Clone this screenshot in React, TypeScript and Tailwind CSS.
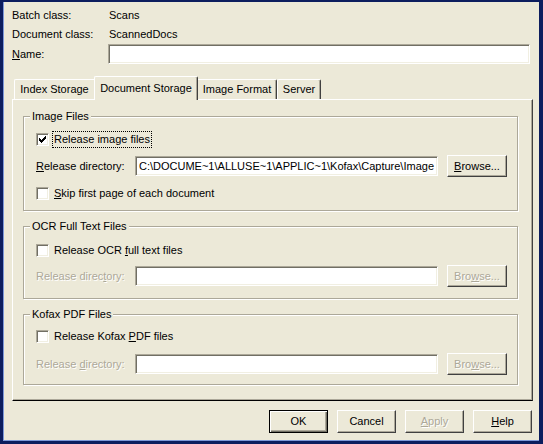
import type { ReactNode } from "react";

const dim = "text-[#aca899] [text-shadow:1px_1px_0_#fff]";

function Check({ checked = false }: { checked?: boolean }) {
  return (
    <span className="w-[13px] h-[13px] shrink-0 bg-white border border-t-[#aca899] border-l-[#aca899] border-r-white border-b-white shadow-[inset_1px_1px_0_#716f64,inset_-1px_-1px_0_#f1efe2] flex items-center justify-center">
      {checked && (
        <svg width="7" height="7" viewBox="0 0 7 7" shapeRendering="crispEdges">
          {[2, 3, 4, 3, 2, 1, 0].map((y, x) => (
            <rect key={x} x={x} y={y} width="1" height="3" fill="#000" />
          ))}
        </svg>
      )}
    </span>
  );
}

function Field({ value = "", className = "" }: { value?: string; className?: string }) {
  return (
    <div
      className={`h-[20px] bg-white border border-t-[#aca899] border-l-[#aca899] border-r-white border-b-white shadow-[inset_1px_1px_0_#716f64,inset_-1px_-1px_0_#f1efe2] flex items-center px-[3px] overflow-hidden whitespace-nowrap ${className}`}
    >
      {value}
    </div>
  );
}

function Btn({
  children,
  size = "w-[59px] h-[23px]",
  def = false,
  disabled = false,
}: {
  children: ReactNode;
  size?: string;
  def?: boolean;
  disabled?: boolean;
}) {
  return (
    <div
      className={`${size} shrink-0 flex items-center justify-center bg-[#ece9d8] border ${
        def
          ? "border-black shadow-[inset_1px_1px_0_#fff,inset_-1px_-1px_0_#716f64,inset_-2px_-2px_0_#aca899]"
          : "border-t-white border-l-white border-r-[#404040] border-b-[#404040] shadow-[inset_-1px_-1px_0_#aca899]"
      } ${disabled ? dim : ""}`}
    >
      {children}
    </div>
  );
}

function Group({
  title,
  height,
  className = "",
  children,
}: {
  title: string;
  height: string;
  className?: string;
  children: ReactNode;
}) {
  return (
    <div
      className={`relative ml-[10px] w-[495px] ${height} border border-[#aca899] shadow-[inset_1px_1px_0_#fff,1px_1px_0_#fff] ${className}`}
    >
      <span className="absolute -top-[8px] left-[6px] bg-[#ece9d8] px-[2px] leading-[14px]">{title}</span>
      {children}
    </div>
  );
}

function DirRow({ disabled = false, mnemonic }: { disabled?: boolean; mnemonic: ReactNode }) {
  return (
    <div className="flex items-center h-[22px]">
      <span className={`w-[99px] shrink-0 ${disabled ? dim : ""}`}>{mnemonic}</span>
      <Field className="w-[303px]" value={disabled ? "" : "C:\\DOCUME~1\\ALLUSE~1\\APPLIC~1\\Kofax\\Capture\\Image"} />
      <div className="ml-[9px]">
        <Btn size="w-[60px] h-[22px]" disabled={disabled}>
          {disabled ? (
            <span>
              Bro<u>w</u>se...
            </span>
          ) : (
            <span>
              <u>B</u>rowse...
            </span>
          )}
        </Btn>
      </div>
    </div>
  );
}

export default function App() {
  return (
    <div className="w-[543px] h-[444px] bg-[#0c1d5e] border-t-2 border-l-[3px] border-r-[4px] border-b-[3px] border-[#0c1d5e] font-['Liberation_Sans',Arial,sans-serif] text-[11px] text-black leading-none">
      <div className="h-full bg-[#ece9d8] border-l border-b border-[#7d98d8] flex flex-col">
        <div className="pl-2 pt-1">
          <div className="flex items-center h-[19px]">
            <span className="w-[97px]">Batch class:</span>
            <span>Scans</span>
          </div>
          <div className="flex items-center h-[19px]">
            <span className="w-[97px]">Document class:</span>
            <span>ScannedDocs</span>
          </div>
          <div className="flex items-center h-[20px]">
            <span className="w-[96px]">
              <u>N</u>ame:
            </span>
            <Field className="w-[422px]" />
          </div>
        </div>

        <div className="mt-3 ml-2 flex items-end h-[23px] relative z-10">
          <div className="ml-[2px] w-[80px] h-[20px] flex items-center justify-center border-t border-l border-white rounded-tl-[2px]">
            Index Storage
          </div>
          <div className="w-[104px] h-[24px] -mb-[1px] flex items-center justify-center bg-[#ece9d8] border-t border-l border-r border-t-white border-l-white border-r-[#404040] shadow-[inset_-1px_0_0_#aca899] rounded-t-[2px] pb-[1px]">
            Document Storage
          </div>
          <div className="w-[79px] h-[20px] flex items-center justify-center border-t border-r border-t-white border-r-[#404040] shadow-[inset_-1px_0_0_#aca899] rounded-tr-[2px]">
            Image Format
          </div>
          <div className="w-[44px] h-[20px] flex items-center justify-center border-t border-l border-r border-t-white border-l-white border-r-[#404040] shadow-[inset_-1px_0_0_#aca899] rounded-t-[2px]">
            Server
          </div>
        </div>

        <div className="ml-2 w-[521px] h-[302px] border border-t-white border-l-white border-r-[#404040] border-b-black shadow-[inset_-1px_-1px_0_#aca899] pt-4">
          <Group title="Image Files" height="h-[95px]">
            <div className="pl-[12px] pt-[12px]">
              <div className="flex items-center h-[20px]">
                <Check checked />
                <span className="ml-[3px] px-[1px] py-[2px] border border-dotted border-black">
                  Release image files
                </span>
              </div>
              <div className="mt-[6px]">
                <DirRow
                  mnemonic={
                    <>
                      <u>R</u>elease directory:
                    </>
                  }
                />
              </div>
              <div className="mt-[6px] flex items-center h-[20px]">
                <Check />
                <span className="ml-[5px]">
                  <u>S</u>kip first page of each document
                </span>
              </div>
            </div>
          </Group>

          <Group title="OCR Full Text Files" height="h-[73px]" className="mt-[15px]">
            <div className="pl-[12px] pt-[13px]">
              <div className="flex items-center h-[20px]">
                <Check />
                <span className="ml-[5px]">
                  Release OCR <u>f</u>ull text files
                </span>
              </div>
              <div className="mt-[5px]">
                <DirRow
                  disabled
                  mnemonic={
                    <>
                      Release direc<u>t</u>ory:
                    </>
                  }
                />
              </div>
            </div>
          </Group>

          <Group title="Kofax PDF Files" height="h-[71px]" className="mt-[15px]">
            <div className="pl-[12px] pt-[11px]">
              <div className="flex items-center h-[20px]">
                <Check />
                <span className="ml-[5px]">
                  Release Kofax <u>P</u>DF files
                </span>
              </div>
              <div className="mt-[7px]">
                <DirRow
                  disabled
                  mnemonic={
                    <>
                      Release <u>d</u>irectory:
                    </>
                  }
                />
              </div>
            </div>
          </Group>
        </div>

        <div className="mt-[9px] pr-[7px] flex justify-end gap-[9px]">
          <Btn def>OK</Btn>
          <Btn>Cancel</Btn>
          <Btn disabled>
            <span>
              <u>A</u>pply
            </span>
          </Btn>
          <Btn>
            <span>
              <u>H</u>elp
            </span>
          </Btn>
        </div>
      </div>
    </div>
  );
}
